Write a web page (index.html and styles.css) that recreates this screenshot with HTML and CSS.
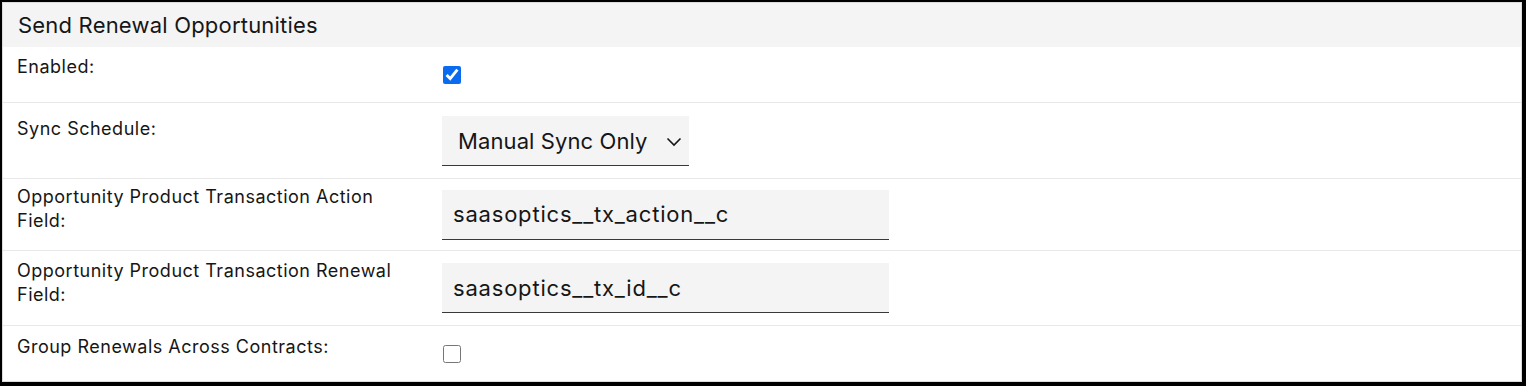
FILE: index.html
```html
<!DOCTYPE html>
<html>
<head>
  <link rel="stylesheet" href="styles.css">
</head>
<body>
  <div class="frame">
    <div class="panel">
      <div class="panel-header">Send Renewal Opportunities</div>

      <div class="form-row check-row first">
        <div class="form-label">Enabled:</div>
        <div class="form-control">
          <input type="checkbox" class="checkbox" checked>
        </div>
      </div>

      <div class="form-row select-row">
        <div class="form-label">Sync Schedule:</div>
        <div class="form-control">
          <div class="select-wrap">
            <select class="select">
              <option>Manual Sync Only</option>
              <option>Daily</option>
              <option>Weekly</option>
            </select>
            <svg class="chevron" width="16" height="10" viewBox="0 0 16 10">
              <path d="M1.5 1.5 L8 8 L14.5 1.5" fill="none" stroke="#161616" stroke-width="1.6"/>
            </svg>
          </div>
        </div>
      </div>

      <div class="form-row input-row">
        <div class="form-label">Opportunity Product Transaction Action Field:</div>
        <div class="form-control">
          <input type="text" class="text-input" value="saasoptics__tx_action__c">
        </div>
      </div>

      <div class="form-row input-row tall">
        <div class="form-label">Opportunity Product Transaction Renewal Field:</div>
        <div class="form-control">
          <input type="text" class="text-input" value="saasoptics__tx_id__c">
        </div>
      </div>

      <div class="form-row check-row last">
        <div class="form-label">Group Renewals Across Contracts:</div>
        <div class="form-control">
          <input type="checkbox" class="checkbox">
        </div>
      </div>
    </div>
  </div>
</body>
</html>
```

FILE: styles.css
```css
html, body {
  margin: 0;
  padding: 0;
}
body {
  font-family: Inter, "Noto Sans", sans-serif;
  color: #161616;
  background: #fff;
}
.frame {
  width: 1526px;
  height: 386px;
  box-sizing: border-box;
  border-style: solid;
  border-color: #000;
  border-width: 2px 4px 4px 2px;
}
.panel {
  height: 100%;
  box-sizing: border-box;
  border: 1px solid #dcdcdc;
  background: #fff;
}
.panel-header {
  height: 44px;
  background: #f4f4f4;
  font-size: 22px;
  letter-spacing: 0.2px;
  line-height: 44px;
  padding-left: 15px;
}
.form-row {
  display: grid;
  grid-template-columns: 439px 1fr;
  align-items: center;
  border-bottom: 1px solid #e8e8e8;
  box-sizing: border-box;
}
.form-row.last {
  border-bottom: none;
}
.form-label {
  font-size: 18px;
  letter-spacing: 0.5px;
  line-height: 23px;
  padding-left: 14px;
  max-width: 400px;
}
.check-row {
  height: 56px;
}
.check-row .form-label {
  margin-bottom: 16px;
}
.select-row {
  height: 76px;
  padding-top: 1px;
}
.select-row .form-label {
  margin-bottom: 26px;
}
.input-row {
  height: 72px;
}
.input-row .form-label {
  margin-bottom: 11px;
  line-height: 24px;
}
.input-row.tall {
  height: 75px;
}
.form-control {
  display: flex;
  align-items: center;
}
.checkbox {
  width: 18px;
  height: 18px;
  margin: 0 0 0 1px;
  accent-color: #0b6bf0;
}
.select-wrap {
  position: relative;
  width: 247px;
}
.select {
  appearance: none;
  -webkit-appearance: none;
  width: 247px;
  height: 50px;
  box-sizing: border-box;
  border: none;
  border-bottom: 1px solid #393939;
  border-radius: 0;
  background: #f4f4f4;
  font-family: Inter, "Noto Sans", sans-serif;
  font-size: 22px;
  letter-spacing: 0.1px;
  color: #161616;
  padding: 0 40px 0 16px;
  outline: none;
}
.chevron {
  position: absolute;
  right: 7px;
  top: 21px;
  pointer-events: none;
}
.text-input {
  width: 447px;
  height: 50px;
  box-sizing: border-box;
  border: none;
  border-bottom: 1px solid #393939;
  border-radius: 0;
  background: #f4f4f4;
  font-family: Inter, "Noto Sans", sans-serif;
  font-size: 22px;
  letter-spacing: 0.8px;
  color: #161616;
  padding: 0 11px;
  outline: none;
}
```
